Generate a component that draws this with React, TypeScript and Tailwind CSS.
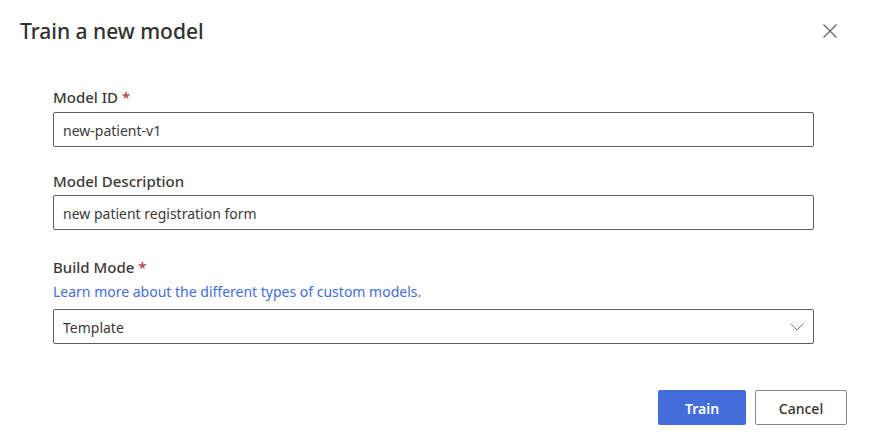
import React from "react";

const field =
  "block h-[35px] w-full rounded-xs border border-[#605e5c] bg-white px-[9px] pt-0.5 text-[14px] text-[#3b3a39] outline-none";
const label = "block text-[15px] leading-5 font-medium text-[#3b3a39]";

function Required() {
  return <span className="font-normal text-[#a4262c]"> *</span>;
}

export default function App() {
  return (
    <div
      role="dialog"
      aria-labelledby="title"
      className="bg-white pb-[22px] font-['Segoe_UI','Noto_Sans',sans-serif] text-[#323130]"
    >
      <header className="flex items-center justify-between pt-[17px] pr-[30px] pl-5">
        <h1 id="title" className="text-[21px] leading-7 font-medium">
          Train a new model
        </h1>
        <button type="button" aria-label="Close" className="p-0.5">
          <svg width="14" height="14" viewBox="0 0 14 14" fill="none" stroke="#605e5c" strokeWidth="1.1">
            <path d="M.5.5l13 13M13.5.5l-13 13" />
          </svg>
        </button>
      </header>
      <form>
        <div className="pt-[42px] pr-[55px] pl-[53px]">
          <div>
            <label htmlFor="model-id" className={label}>
              Model ID
              <Required />
            </label>
            <input id="model-id" required defaultValue="new-patient-v1" className={`${field} mt-[5px]`} />
          </div>
          <div className="mt-6">
            <label htmlFor="description" className={label}>
              Model Description
            </label>
            <input id="description" defaultValue="new patient registration form" className={`${field} mt-1`} />
          </div>
          <div className="mt-[27px]">
            <label htmlFor="build-mode" className={label}>
              Build Mode
              <Required />
            </label>
            <a href="#custom-models" className="mt-[5px] block w-fit text-[14px] leading-5 text-[#436dd8]">
              Learn more about the different types of custom models.
            </a>
            <div className="mt-[7px] grid items-center">
              <select id="build-mode" required className={`${field} col-start-1 row-start-1 appearance-none`}>
                <option>Template</option>
                <option>Neural</option>
              </select>
              <svg
                className="pointer-events-none col-start-1 row-start-1 mr-2.5 justify-self-end"
                width="14"
                height="8"
                viewBox="0 0 14 8"
                fill="none"
                stroke="#7a7876"
              >
                <path d="M.6.6L7 7L13.4.6" />
              </svg>
            </div>
          </div>
        </div>
        <div className="mt-[46px] flex justify-end gap-[9px] pr-[22px] text-[14px]">
          <button type="button" className="h-[35px] w-[88px] rounded-xs bg-[#436dd8] pt-0.5 font-semibold text-white">
            Train
          </button>
          <button type="button" className="h-[35px] w-[92px] rounded-xs border border-[#8a8886] bg-white pt-0.5 font-medium">
            Cancel
          </button>
        </div>
      </form>
    </div>
  );
}
